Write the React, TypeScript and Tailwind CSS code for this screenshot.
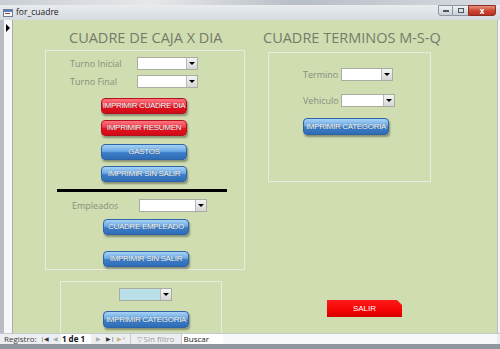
import React from "react";

const btnBase =
  "flex items-center justify-center whitespace-nowrap rounded-[4px] text-white text-[8px] tracking-[-0.3px] leading-none shadow-[1px_2px_2px_rgba(0,0,0,0.35)] [text-shadow:0_0_1px_rgba(0,0,0,0.6)] font-['Liberation_Sans',Arial,sans-serif]";
const blueBtn = `${btnBase} border border-[#2d64a8] bg-[linear-gradient(#a7d2f5,#6aa9e6_45%,#3d7ec9_55%,#2f6cb5)]`;
const redBtn = `${btnBase} border border-[#b3121c] bg-[linear-gradient(#ff7480,#f23a48_45%,#e5101e_55%,#d00c18)]`;

function Combo({ w, light }: { w: string; light?: boolean }) {
  return (
    <div
      className={`flex h-[13px] ${w} border border-[#a9ad9f] ${
        light ? "bg-[#b9dfe8]" : "bg-white"
      }`}
    >
      <div className="flex-1" />
      <div className="flex w-[11px] items-center justify-center border-l border-[#b8b8b8] bg-[linear-gradient(#f4f4f4,#d6d6d6)]">
        <div className="h-0 w-0 border-x-[3px] border-t-[3px] border-x-transparent border-t-black" />
      </div>
    </div>
  );
}

function Label({ children, w }: { children: React.ReactNode; w: string }) {
  return <div className={`${w} text-[9px] leading-none text-[#8a8e7e]`}>{children}</div>;
}

export default function App() {
  return (
    <div
      className="flex h-[349px] w-[500px] flex-col overflow-hidden bg-[#9aa0a6]"
      style={{ fontFamily: '"Open Sans", "Liberation Sans", sans-serif' }}
    >
      {/* blurred window behind */}
      <div className="h-[5px] bg-[linear-gradient(90deg,#c9ced4,#e6e8ea_30%,#b8bec6_60%,#d9dde2)]" />

      {/* title bar */}
      <div className="flex h-[15px] items-center bg-[linear-gradient(#e9ecef,#d5dadf)] pl-[3px]">
        <div className="mr-[3px] flex h-[8px] w-[10px] flex-col border border-[#6d7d96] bg-white">
          <div className="h-[2px] bg-[#5b7fb8]" />
          <div className="mt-[1px] ml-[1px] h-[1px] w-[5px] bg-[#9a4040]" />
        </div>
        <span className="text-[8.5px] leading-none text-[#1c1c1c]">for_cuadre</span>
        <div className="ml-auto mr-[4px] flex h-[11px] self-start">
          <div className="flex w-[15px] items-end justify-center rounded-bl-[3px] border border-[#8c96a2] bg-[linear-gradient(#f0f2f4,#c9cfd6)] pb-[3px]">
            <div className="h-[2px] w-[6px] bg-[#4c5560]" />
          </div>
          <div className="flex w-[15px] items-center justify-center border-y border-[#8c96a2] bg-[linear-gradient(#f0f2f4,#c9cfd6)]">
            <div className="h-[5px] w-[6px] border border-[#4c5560]" />
          </div>
          <div className="flex w-[28px] items-center justify-center rounded-br-[3px] border border-[#8e2f25] bg-[linear-gradient(#e8917f,#cc4a35_50%,#b9301d)] text-[8px] font-bold leading-none text-white">
            x
          </div>
        </div>
      </div>

      {/* main area */}
      <div className="flex h-[313px]">
        <div className="flex w-[13px] border-l-[4px] border-r border-[#a8adb2] border-l-[#b6bcc2] bg-[#f6f7f8] pt-[4px]">
          <div className="ml-[2px] h-0 w-0 border-y-[4px] border-l-[4px] border-y-transparent border-l-black" />
        </div>

        <div className="relative flex flex-1 overflow-hidden bg-[#cfddb0]">
          {/* left column */}
          <div className="flex w-[250px] flex-col pl-[32px]">
            <div className="mt-[8px] h-[20px] whitespace-nowrap pl-[24px] text-[14.5px] leading-[20px] text-[#767b6a]">
              CUADRE DE CAJA X DIA
            </div>
            <div className="mt-[2px] flex h-[220px] w-[200px] shrink-0 flex-col border border-[#e7ecdc]">
              <div className="mt-[6px] flex items-center pl-[24px]">
                <Label w="w-[67px]">Turno Inicial</Label>
                <Combo w="w-[61px]" />
              </div>
              <div className="mt-[5px] flex items-center pl-[24px]">
                <Label w="w-[67px]">Turno Final</Label>
                <Combo w="w-[61px]" />
              </div>
              <div className="mt-[10px] flex flex-col gap-[6px] pl-[55px]">
                <div className={`${redBtn} h-[16px] w-[86px]`}>IMPRIMIR CUADRE DIA</div>
                <div className={`${redBtn} h-[16px] w-[86px]`}>IMPRIMIR RESUMEN</div>
                <div className={`${blueBtn} mt-[2px] h-[16px] w-[86px]`}>GASTOS</div>
                <div className={`${blueBtn} h-[16px] w-[86px]`}>IMPRIMIR SIN SALIR</div>
              </div>
              <div className="ml-[11px] mt-[7px] h-[3px] w-[170px] bg-black" />
              <div className="mt-[7px] flex items-center pl-[26px]">
                <Label w="w-[67px]">Empleados</Label>
                <Combo w="w-[68px]" />
              </div>
              <div className="mt-[7px] flex flex-col gap-[16px] pl-[57px]">
                <div className={`${blueBtn} h-[16px] w-[86px]`}>CUADRE EMPLEADO</div>
                <div className={`${blueBtn} h-[16px] w-[86px]`}>IMPRIMIR SIN SALIR</div>
              </div>
            </div>
            <div className="ml-[15px] mt-[11px] flex h-[60px] w-[162px] shrink-0 flex-col border border-[#e7ecdc]">
              <div className="mt-[6px] pl-[58px]">
                <Combo w="w-[53px]" light />
              </div>
              <div className={`${blueBtn} ml-[42px] mt-[10px] h-[17px] w-[86px]`}>
                IMPRIMIR CATEGORIA
              </div>
            </div>
          </div>

          {/* right column */}
          <div className="flex flex-1 flex-col">
            <div className="mt-[8px] h-[20px] whitespace-nowrap text-[14.5px] leading-[20px] text-[#767b6a]">
              CUADRE TERMINOS M-S-Q
            </div>
            <div className="ml-[5px] mt-[4px] flex h-[130px] w-[163px] shrink-0 flex-col border border-[#e7ecdc]">
              <div className="mt-[15px] flex items-center pl-[34px]">
                <Label w="w-[38px]">Termino</Label>
                <Combo w="w-[52px]" />
              </div>
              <div className="mt-[13px] flex items-center pl-[34px]">
                <Label w="w-[38px]">Vehiculo</Label>
                <Combo w="w-[54px]" />
              </div>
              <div className={`${blueBtn} ml-[34px] mt-[11px] h-[17px] w-[86px]`}>
                IMPRIMIR CATEGORIA
              </div>
            </div>
            <div className="ml-[64px] mt-[118px] flex h-[17px] w-[75px] items-center justify-center bg-[linear-gradient(#ff1a1a,#f00000_70%,#d40000)] font-['Liberation_Sans',Arial,sans-serif] text-[8px] leading-none text-white shadow-[1px_2px_2px_rgba(0,0,0,0.35)] [clip-path:polygon(0_0,calc(100%-5px)_0,100%_5px,100%_100%,0_100%)]">
              SALIR
            </div>
          </div>
        </div>
        <div className="w-[3px] border-l border-[#b9bec4] bg-[#f3f4f5]" />
      </div>

      {/* status bar */}
      <div className="flex h-[11px] items-center border-t border-[#c5cad0] bg-[#eceef1] text-[8px] leading-none text-[#3a3a3a]">
        <span className="ml-[4px]">Registro:</span>
        <span className="ml-[4px] text-[6px] text-[#333]">|◀</span>
        <span className="ml-[4px] text-[6px] text-[#aaa]">◀</span>
        <div className="ml-[3px] flex h-[10px] w-[30px] items-center bg-white pl-[1px] font-bold text-[#111]">
          1 de 1
        </div>
        <span className="ml-[5px] text-[6px] text-[#aaa]">▶</span>
        <span className="ml-[5px] text-[6px] text-[#333]">▶|</span>
        <span className="ml-[3px] text-[6px] text-[#c9b27a]">▶*</span>
        <div className="ml-[4px] flex h-[10px] items-center gap-[2px] border-l border-[#c5cad0] px-[6px] text-[#9a9a9a]">
          <span className="text-[7px]">▽</span>Sin filtro
        </div>
        <div className="flex h-[10px] w-[42px] items-center border-l border-[#c5cad0] bg-white pl-[2px] text-[#222]">
          Buscar
        </div>
        <div className="h-[10px] flex-1 bg-[#f7f8f9]" />
        <div className="w-[3px]" />
      </div>
      <div className="flex-1 bg-[#8f969d]" />
    </div>
  );
}
